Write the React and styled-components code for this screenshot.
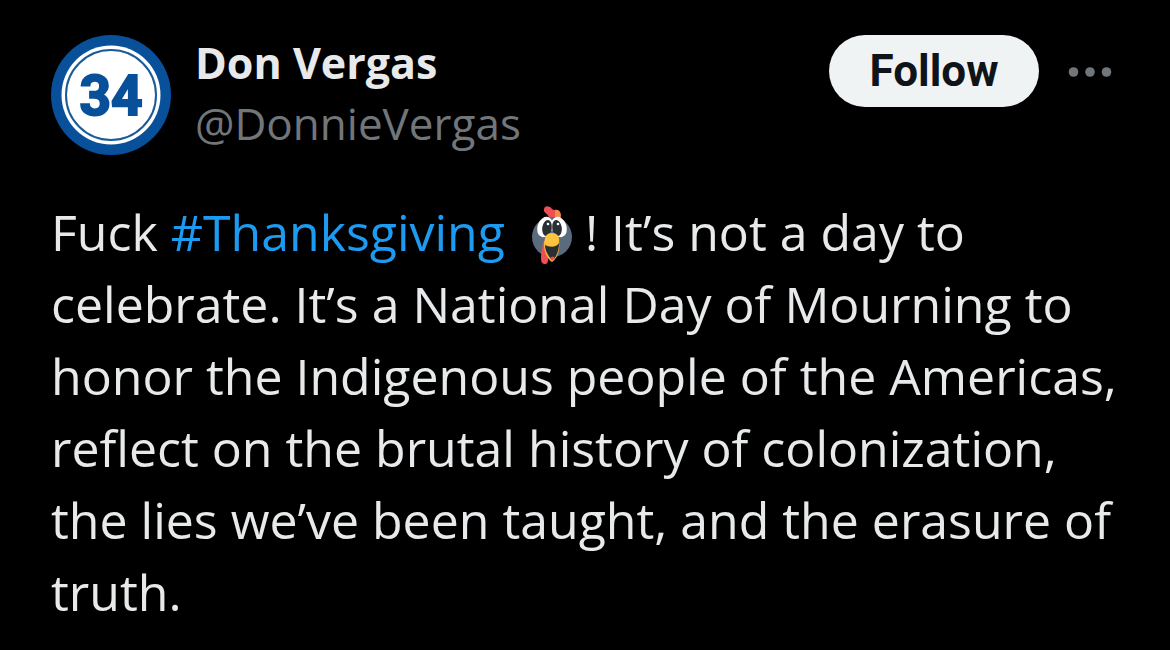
import React from "react";
import styled, { createGlobalStyle } from "styled-components";

const GlobalStyle = createGlobalStyle`
  * { box-sizing: border-box; }
  body {
    margin: 0;
    background: #000;
    color: #e7e9ea;
    font-family: "Open Sans", "Noto Sans", sans-serif;
  }
`;

const Post = styled.article`
  padding: 35px 51px 20px;
`;

const Header = styled.header`
  display: flex;
  align-items: flex-start;
`;

const Avatar = styled.svg`
  width: 120px;
  height: 120px;
  flex: none;
`;

const Author = styled.div`
  display: flex;
  flex-direction: column;
  flex: 1;
  margin: -2px 0 0 24px;
  line-height: 60px;
  font-size: 44px;
  white-space: nowrap;
`;

const Name = styled.span`
  font-size: 43px;
  font-weight: 700;
`;

const Handle = styled.span`
  color: #71767b;
`;

const Actions = styled.div`
  display: flex;
  align-items: center;
  gap: 24px;
`;

const FollowButton = styled.button`
  width: 210px;
  height: 72px;
  padding: 0;
  border: 0;
  border-radius: 36px;
  background: #eff3f4;
  color: #0f1419;
  font: 700 44px/72px Roboto, "Liberation Sans", sans-serif;
`;

const MoreButton = styled.button`
  display: flex;
  padding: 0;
  border: 0;
  background: none;
  color: #71767b;
`;

const Body = styled.p`
  margin: 41px 0 0;
  font-size: 50px;
  line-height: 72px;
`;

const Hashtag = styled.a`
  color: #1d9bf0;
  text-decoration: none;
`;

const Turkey = styled.svg`
  width: 42px;
  height: 60px;
  margin: 0 0 0 12px;
  vertical-align: -14px;
`;

export default function App() {
  return (
    <>
      <GlobalStyle />
      <Post>
        <Header>
          <Avatar viewBox="0 0 120 120" role="img" aria-label="Don Vergas">
            <circle cx="60" cy="60" r="60" fill="#08509a" />
            <circle cx="60" cy="60" r="49.5" fill="#fff" />
            <circle cx="60" cy="60" r="45" fill="none" stroke="#1b5c98" strokeWidth="2" />
            <text
              x="60"
              y="80"
              textAnchor="middle"
              fill="#08509a"
              stroke="#08509a"
              strokeWidth="2"
              fontFamily="Roboto, 'Liberation Sans', sans-serif"
              fontWeight="700"
              fontSize="55"
            >
              34
            </text>
          </Avatar>
          <Author>
            <Name>Don Vergas</Name>
            <Handle>@DonnieVergas</Handle>
          </Author>
          <Actions>
            <FollowButton type="button">Follow</FollowButton>
            <MoreButton type="button" aria-label="More">
              <svg width="56" height="20" viewBox="0 0 56 20" fill="currentColor">
                <circle cx="10.5" cy="11" r="4.8" />
                <circle cx="27" cy="11" r="4.8" />
                <circle cx="43.5" cy="11" r="4.8" />
              </svg>
            </MoreButton>
          </Actions>
        </Header>
        <Body>
          Fuck <Hashtag href="#thanksgiving">#Thanksgiving</Hashtag>{" "}
          <Turkey viewBox="8 0 42 60" role="img" aria-label="turkey">
            <path d="M27 13C26 8 21 8 22 4C23 0 28 1 30 4C32 6 37 4 38 8C40 12 38 14 35 15Z" fill="#ef4f53" />
            <path d="M33 5C38 4 40 9 38 14L33 14Z" fill="#f48b4b" />
            <circle cx="30" cy="32" r="20" fill="#596b7c" />
            <ellipse cx="23" cy="22" rx="7.5" ry="10.5" fill="#fff" transform="rotate(20 23 22)" />
            <ellipse cx="37" cy="22" rx="7.5" ry="10.5" fill="#fff" transform="rotate(-20 37 22)" />
            <ellipse cx="25" cy="23" rx="4.8" ry="8" fill="#292f33" transform="rotate(8 25 23)" />
            <ellipse cx="35" cy="23" rx="4.8" ry="8" fill="#292f33" transform="rotate(-8 35 23)" />
            <circle cx="26" cy="19" r="1.3" fill="#fff" />
            <circle cx="36" cy="19" r="1.3" fill="#fff" />
            <path d="M23 34C20 41 19 48 19 54C19 60 25 61 26 56C27 50 23 44 26 38Z" fill="#ef4f53" />
            <path d="M22 36C21 45 25 54 30 57C36 53 38 44 37 36Z" fill="#f9b73e" />
            <path d="M23 40Q30 44 37 38C37 45 35 50 32 54H29C25 49 23 45 23 40Z" fill="#292f33" />
            <path d="M28 53Q31 50 33 53L30 56Z" fill="#e94b50" />
            <path d="M30 28C36 28 38 33 37 37C36 43 25 43 23 37C22 33 24 28 30 28Z" fill="#ffc43d" />
          </Turkey>
          {" "}! It’s not a day to
          <br />
          celebrate. It’s a National Day of Mourning to
          <br />
          honor the Indigenous people of the Americas,
          <br />
          reflect on the brutal history of colonization,
          <br />
          the lies we’ve been taught, and the erasure of
          <br />
          truth.
        </Body>
      </Post>
    </>
  );
}
